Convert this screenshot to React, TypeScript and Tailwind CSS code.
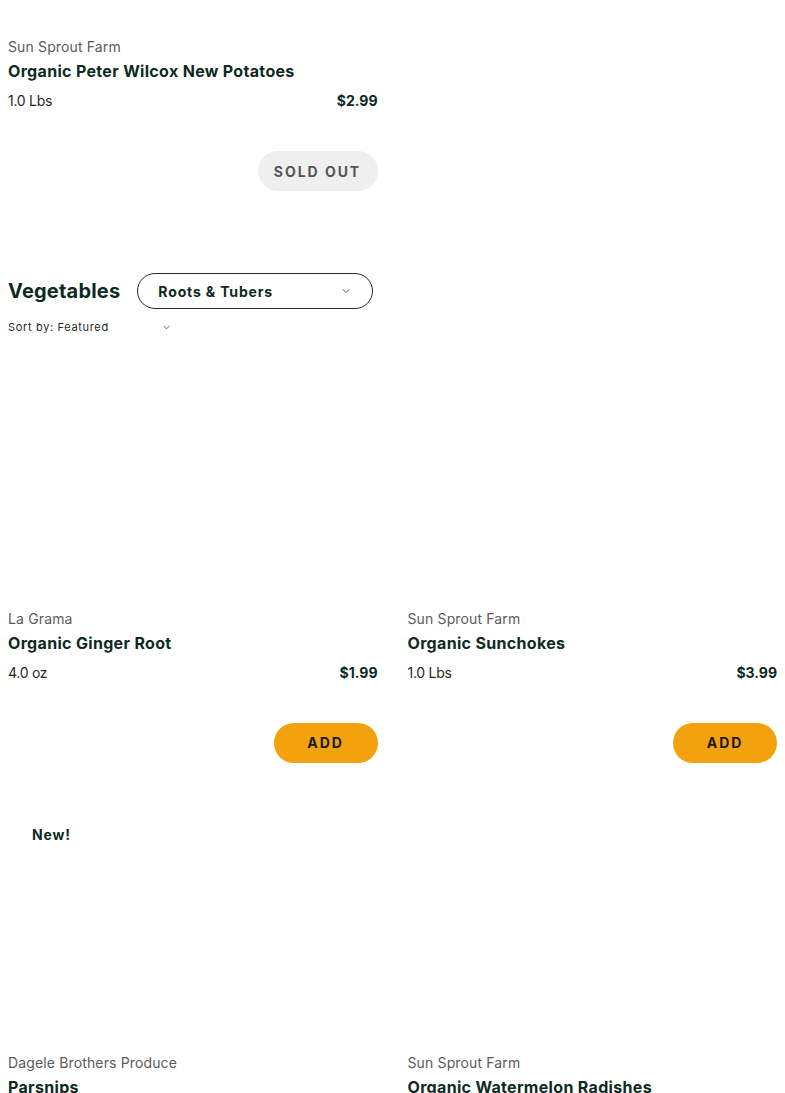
import { ChevronDown } from 'lucide-react'

interface Product {
  vendor: string
  name: string
  size?: string
  price?: string
  soldOut?: boolean
  isNew?: boolean
}

const font = { fontFamily: 'Inter, "Noto Sans", sans-serif' }

const vegetables: Product[] = [
  { vendor: 'La Grama', name: 'Organic Ginger Root', size: '4.0 oz', price: '$1.99' },
  { vendor: 'Sun Sprout Farm', name: 'Organic Sunchokes', size: '1.0 Lbs', price: '$3.99' },
  { vendor: 'Dagele Brothers Produce', name: 'Parsnips', isNew: true },
  { vendor: 'Sun Sprout Farm', name: 'Organic Watermelon Radishes' },
]

function ProductInfo({ product }: { product: Product }) {
  return (
    <div className="flex flex-col">
      <p className="text-[14px] leading-5 tracking-[0.01em] text-[#5b5b5b]">{product.vendor}</p>
      <h3 className="mt-[2px] text-[16px] leading-6 font-bold tracking-[0.02em] text-[#0e2a1f]">
        {product.name}
      </h3>
      {product.size && (
        <div className="mt-[8px] flex items-center justify-between text-[14px] leading-5 text-[#1c2b24]">
          <span className="tracking-[-0.02em]">{product.size}</span>
          <span className="font-bold text-[#0e2a1f]">{product.price}</span>
        </div>
      )}
      {product.size && (
        <div className="mt-[40px] flex justify-end">
          {product.soldOut ? (
            <button className="h-10 w-[120px] rounded-full bg-[#efefef] text-[14px] font-bold tracking-[0.14em] text-[#555555]">
              SOLD OUT
            </button>
          ) : (
            <button className="h-10 w-[104px] rounded-full bg-[#f3a20e] text-[14px] font-bold tracking-[0.14em] text-[#1a1a1a]">
              ADD
            </button>
          )}
        </div>
      )}
    </div>
  )
}

function ProductCard({ product }: { product: Product }) {
  return (
    <div className="flex flex-col">
      <div className="relative h-[270px]">
        {product.isNew && (
          <span className="absolute left-6 top-[41px] text-[14px] font-bold tracking-[0.06em] text-[#0e2a1f]">
            New!
          </span>
        )}
      </div>
      <ProductInfo product={product} />
    </div>
  )
}

export default function App() {
  return (
    <div className="min-h-[1093px] overflow-hidden bg-white px-2 pt-[37px]" style={font}>
      <div className="grid grid-cols-2 gap-x-[30px]">
        <ProductInfo
          product={{
            vendor: 'Sun Sprout Farm',
            name: 'Organic Peter Wilcox New Potatoes',
            size: '1.0 Lbs',
            price: '$2.99',
            soldOut: true,
          }}
        />
        <div />
      </div>

      <div className="mt-[82px] flex items-center gap-[17px]">
        <h2 className="text-[20px] font-bold tracking-[0.01em] text-[#0e2a1f]">Vegetables</h2>
        <button className="flex h-9 w-[236px] items-center justify-between rounded-full border border-[#1f2a25] pl-5 pr-5 text-[14px] font-bold tracking-[0.06em] text-[#0e2a1f]">
          Roots &amp; Tubers
          <ChevronDown size={12} strokeWidth={1.5} />
        </button>
      </div>
      <div className="mt-[10px] flex w-[164px] items-center justify-between text-[11px] tracking-[0.06em] text-[#1c2b24]">
        <span>Sort by: Featured</span>
        <ChevronDown size={11} strokeWidth={1.5} />
      </div>

      <div className="mt-[3px] grid grid-cols-2 gap-x-[30px] gap-y-[20px]">
        {vegetables.map((p, i) => (
          <ProductCard key={i} product={p} />
        ))}
      </div>
    </div>
  )
}
